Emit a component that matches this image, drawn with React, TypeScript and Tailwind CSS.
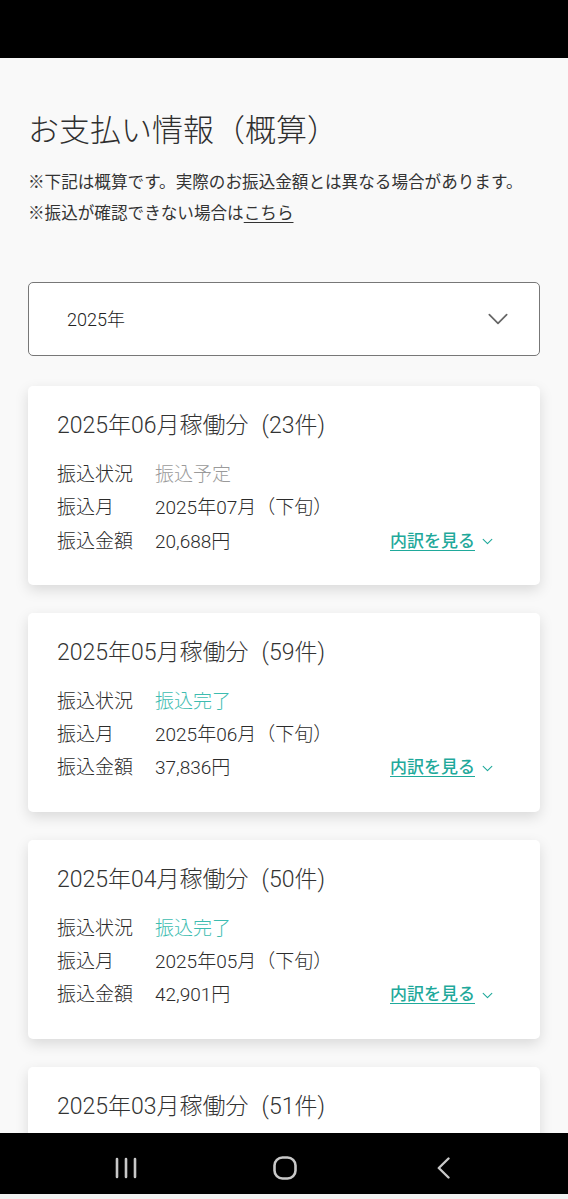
const FONT = "font-['Roboto','Noto_Sans_CJK_JP',sans-serif]";

type Payment = {
  title: string;
  count: number;
  status: string;
  done: boolean;
  month: string;
  amount: string;
};

const payments: Payment[] = [
  { title: '2025年06月稼働分', count: 23, status: '振込予定', done: false, month: '2025年07月（下旬）', amount: '20,688円' },
  { title: '2025年05月稼働分', count: 59, status: '振込完了', done: true, month: '2025年06月（下旬）', amount: '37,836円' },
  { title: '2025年04月稼働分', count: 50, status: '振込完了', done: true, month: '2025年05月（下旬）', amount: '42,901円' },
  { title: '2025年03月稼働分', count: 51, status: '振込完了', done: true, month: '2025年04月（下旬）', amount: '31,204円' },
];

function Chevron({ className }: { className?: string }) {
  return (
    <svg viewBox="0 0 24 24" fill="none" stroke="currentColor" strokeLinecap="round" strokeLinejoin="round" className={className}>
      <path d="M4 8l8 8 8-8" />
    </svg>
  );
}

function PaymentCard({ p }: { p: Payment }) {
  return (
    <div className="rounded-[5px] bg-white px-[29px] pt-[24px] pb-[27px] shadow-[0_5px_14px_rgba(0,0,0,0.13)]">
      <div className="text-[23px] leading-[32px] font-light text-[#333]">
        {p.title}
        <span className="ml-[13px]">({p.count}件)</span>
      </div>
      <div className="mt-[16px] text-[19px] leading-[33.3px] font-light text-[#2b2b2b]">
        <div className="flex">
          <span className="w-[98px] shrink-0">振込状況</span>
          <span className={p.done ? 'text-[#3dbcb0]' : 'text-[#9a9a9a]'}>{p.status}</span>
        </div>
        <div className="flex">
          <span className="w-[98px] shrink-0">振込月</span>
          <span>{p.month}</span>
        </div>
        <div className="flex items-center">
          <span className="w-[98px] shrink-0">振込金額</span>
          <span className="flex-1">{p.amount}</span>
          <a className="mr-[17px] flex items-center text-[17px] font-medium text-[#1fa99b] underline underline-offset-[3px]">
            内訳を見る
            <Chevron className="ml-[6px] h-[13px] w-[13px] stroke-[2]" />
          </a>
        </div>
      </div>
    </div>
  );
}

export default function App() {
  return (
    <div className={`${FONT} flex h-[1199px] w-[568px] flex-col overflow-hidden bg-[#f9f9f9]`}>
      <div className="h-[58px] shrink-0 bg-black" />
      <main className="min-h-0 flex-1 overflow-hidden px-[28px] pt-[52px]">
        <h1 className="text-[31px] leading-[42px] font-light text-[#2f2f2f]">お支払い情報（概算）</h1>
        <div className="mt-[15px] text-[16.6px] leading-[31px] text-[#333]">
          <p className="whitespace-nowrap">※下記は概算です。実際のお振込金額とは異なる場合があります。</p>
          <p>
            ※振込が確認できない場合は<a className="underline underline-offset-[3px]">こちら</a>
          </p>
        </div>
        <div className="mt-[53px] flex h-[74px] items-center justify-between rounded-[5px] border border-[#777] bg-white pr-[28px] pl-[38px]">
          <span className="text-[18px] font-light text-[#222]">2025年</span>
          <Chevron className="h-[26px] w-[26px] stroke-[1.6] text-[#666]" />
        </div>
        <div className="mt-[30px] flex flex-col gap-[28px]">
          {payments.map((p) => (
            <PaymentCard key={p.title} p={p} />
          ))}
        </div>
      </main>
      <nav className="flex h-[61px] shrink-0 items-center bg-black pt-[8px] pl-[115px] text-[#c8c8c8]">
        <svg viewBox="0 0 22 22" className="h-[22px] w-[22px]" fill="none" stroke="currentColor" strokeWidth="2.6" strokeLinecap="round">
          <path d="M2 2v18M11 2v18M20 2v18" />
        </svg>
        <svg viewBox="0 0 24 24" className="ml-[136px] h-[24px] w-[24px]" fill="none" stroke="currentColor" strokeWidth="2.6">
          <rect x="1.5" y="1.5" width="21" height="21" rx="8" />
        </svg>
        <svg viewBox="0 0 13 22" className="ml-[140px] h-[22px] w-[13px]" fill="none" stroke="currentColor" strokeWidth="2.4" strokeLinecap="round" strokeLinejoin="round">
          <path d="M11.5 1.5L1.8 11l9.7 9.5" />
        </svg>
      </nav>
      <div className="h-[5px] shrink-0 bg-[#f2f2f2]" />
    </div>
  );
}
